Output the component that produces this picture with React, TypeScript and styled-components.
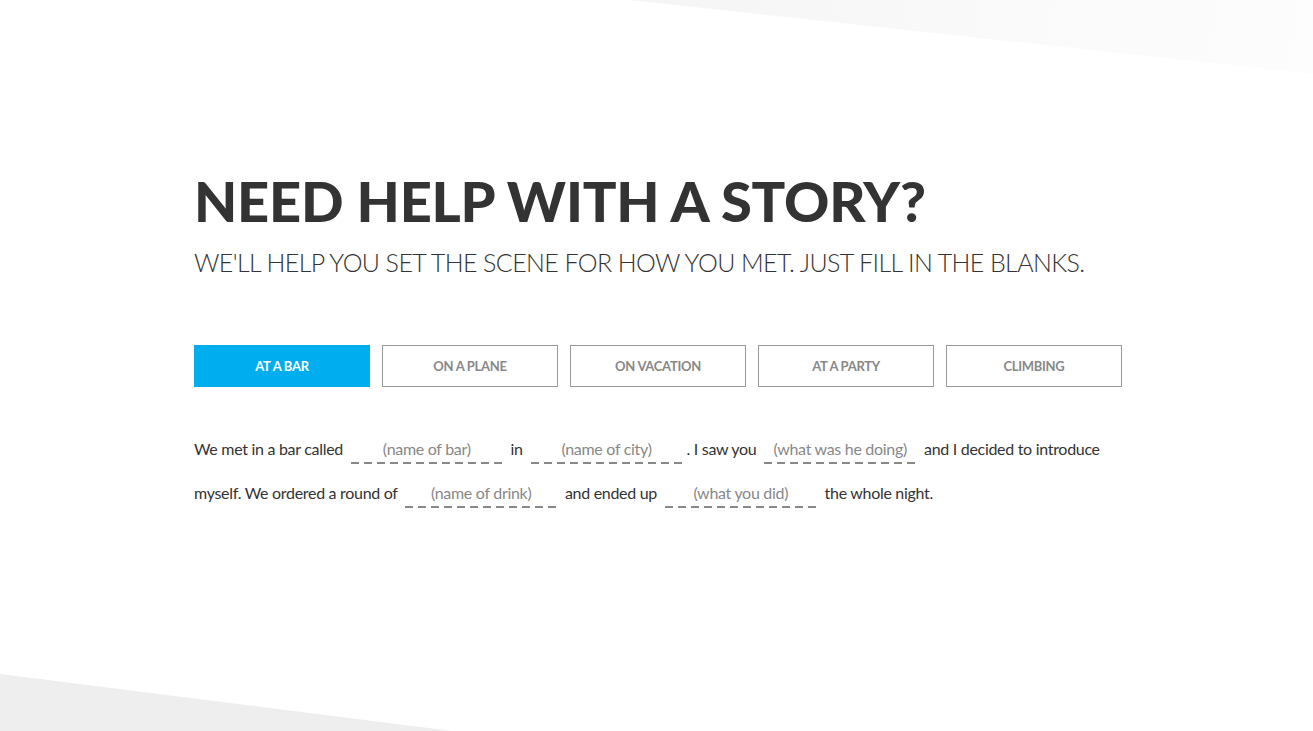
import React, { useState } from "react";
import styled, { createGlobalStyle } from "styled-components";

const GlobalStyle = createGlobalStyle`
  html, body {
    margin: 0;
    padding: 0;
    background: #fff;
  }
  body {
    font-family: "Lato", "Liberation Sans", sans-serif;
    color: #333;
  }
`;

const tabs = ["AT A BAR", "ON A PLANE", "ON VACATION", "AT A PARTY", "CLIMBING"];

export default function App() {
  const [active, setActive] = useState(0);

  return (
    <>
      <GlobalStyle />
      <Page>
        <TopShape />
        <BottomShape />
        <Content>
          <Title>NEED HELP WITH A STORY?</Title>
          <Subtitle>
            WE'LL HELP YOU SET THE SCENE FOR HOW YOU MET. JUST FILL IN THE BLANKS.
          </Subtitle>
          <Tabs>
            {tabs.map((t, i) => (
              <Tab key={t} $active={active === i} onClick={() => setActive(i)}>
                {t}
              </Tab>
            ))}
          </Tabs>
          <Story>
            We met in a bar called <Blank>(name of bar)</Blank> in{" "}
            <Blank>(name of city)</Blank>. I saw you{" "}
            <Blank>(what was he doing)</Blank> and I decided to introduce
            <br />
            myself. We ordered a round of <Blank>(name of drink)</Blank> and
            ended up <Blank>(what you did)</Blank> the whole night.
          </Story>
        </Content>
      </Page>
    </>
  );
}

const Page = styled.div`
  position: relative;
  width: 100%;
  height: 731px;
  overflow: hidden;
  background: #fff;
`;

const TopShape = styled.div`
  position: absolute;
  top: 0;
  right: 0;
  width: 684px;
  height: 74px;
  background: linear-gradient(100deg, #f5f5f5 0%, #fafafa 60%, #fdfdfd 100%);
  clip-path: polygon(0 0, 100% 0, 100% 100%);
`;

const BottomShape = styled.div`
  position: absolute;
  left: 0;
  bottom: 0;
  width: 452px;
  height: 57px;
  background: #eeeeee;
  clip-path: polygon(0 0, 100% 100%, 0 100%);
`;

const Content = styled.div`
  position: relative;
  width: 928px;
  margin-left: 194px;
  padding-top: 170px;
`;

const Title = styled.h1`
  margin: 0;
  font-family: "Lato", sans-serif;
  font-weight: 900;
  font-size: 56px;
  line-height: 62px;
  letter-spacing: -0.2px;
  color: #333;
`;

const Subtitle = styled.h2`
  margin: 14px 0 0;
  font-family: "Lato", sans-serif;
  font-weight: 300;
  font-size: 25px;
  line-height: 32px;
  letter-spacing: -0.6px;
  white-space: nowrap;
  color: #333;
`;

const Tabs = styled.div`
  display: grid;
  grid-template-columns: repeat(5, 176px);
  gap: 12px;
  margin-top: 67px;
`;

const Tab = styled.button<{ $active: boolean }>`
  height: 42px;
  box-sizing: border-box;
  border: 1px solid ${(p) => (p.$active ? "#00aeef" : "#999")};
  background: ${(p) => (p.$active ? "#00aeef" : "#fff")};
  color: ${(p) => (p.$active ? "#fff" : "#888")};
  font-family: "Lato", sans-serif;
  font-weight: 700;
  font-size: 13px;
  letter-spacing: -0.3px;
  cursor: pointer;
  padding: 0;
`;

const Story = styled.p`
  margin: 40px 0 0;
  font-family: "Lato", sans-serif;
  font-weight: 400;
  font-size: 16px;
  line-height: 44px;
  letter-spacing: -0.3px;
  white-space: nowrap;
  color: #333;
`;

const Blank = styled.span`
  display: inline-block;
  width: 152px;
  margin: 0 4px;
  padding-bottom: 4px;
  line-height: 22px;
  text-align: center;
  color: #888;
  background-image: repeating-linear-gradient(
    to right,
    #888 0 8px,
    transparent 8px 13px
  );
  background-size: 100% 2px;
  background-position: left bottom;
  background-repeat: no-repeat;
`;
